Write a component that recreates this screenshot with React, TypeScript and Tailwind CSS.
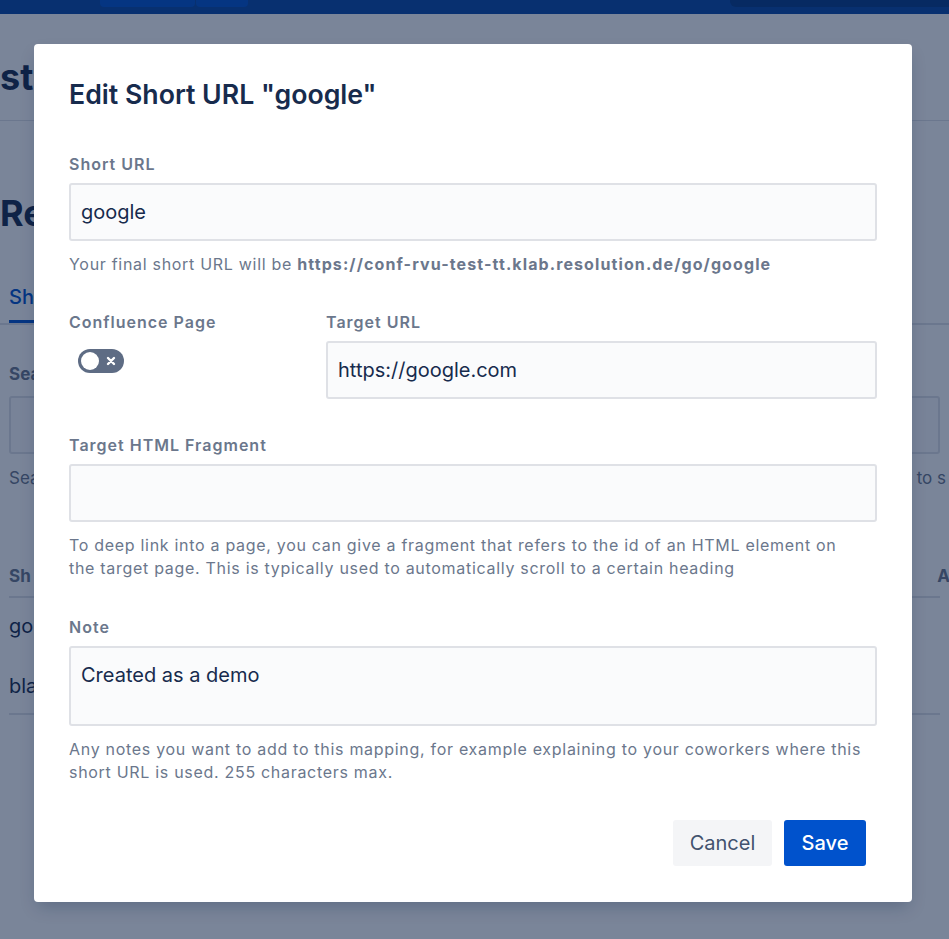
import React from "react";

const font = { fontFamily: 'Inter, "Liberation Sans", Arial, sans-serif' };

function Field({ label, children, hint }: { label: string; children: React.ReactNode; hint?: React.ReactNode }) {
  return (
    <div>
      <p className="text-[16px] font-semibold leading-[20px] tracking-[1px] text-[#6b778c]">{label}</p>
      <div className="mt-[9px]">{children}</div>
      {hint && <p className="mt-[12px] text-[16px] leading-[23px] tracking-[0.7px] text-[#6b778c]">{hint}</p>}
    </div>
  );
}

function TextInput({ value, tall }: { value?: string; tall?: boolean }) {
  return (
    <div
      className={`rounded-[3px] border-2 border-[#dfe1e6] bg-[#fafbfc] px-[10px] text-[20px] text-[#172b4d] ${
        tall ? "h-[80px] pt-[12px]" : "flex h-[58px] items-center"
      }`}
    >
      {value}
    </div>
  );
}

function Toggle() {
  return (
    <div className="ml-[9px] mt-[17px] flex h-[24px] w-[46px] items-center justify-between rounded-full bg-[#5e6c84] px-[3px]">
      <span className="h-[18px] w-[18px] rounded-full bg-white" />
      <svg width="14" height="14" viewBox="0 0 14 14" className="mr-[3px]">
        <path d="M4 4l6 6M10 4l-6 6" stroke="white" strokeWidth="2.4" strokeLinecap="round" />
      </svg>
    </div>
  );
}

function BackgroundPage() {
  return (
    <div className="h-[939px] overflow-hidden bg-white text-[#172b4d]">
      <div className="flex h-[14px] bg-[#0747a6]">
        <div className="ml-[100px] h-[7px] w-[95px] rounded-b bg-[#0052cc]" />
        <div className="ml-px h-[7px] w-[52px] rounded-b bg-[#0052cc]" />
        <div className="ml-auto h-[7px] w-[219px] rounded-bl-md bg-[#053a87]" />
      </div>
      <div className="border-b border-[#dfe1e6] pt-[40px] pb-[20px]">
        <p className="text-[36px] font-bold leading-[46px]">st</p>
      </div>
      <div>
        <p className="mt-[69px] text-[36px] font-bold leading-[46px]">Re</p>
        <div className="mt-[46px] border-b-2 border-[#dfe1e6] pl-[9px]">
          <p className="w-[60px] border-b-[3px] border-[#0052cc] pb-[8px] text-[20px] font-medium text-[#0052cc]">Sh</p>
        </div>
        <div className="px-[9px]">
          <p className="mt-[37px] text-[17px] font-bold text-[#6b778c]">Sea</p>
          <div className="mt-[8px] h-[58px] rounded-[3px] border-2 border-[#dfe1e6] bg-[#fafbfc]" />
          <div className="mt-[12px] flex justify-between text-[17px] text-[#6b778c]">
            <span>Sea</span>
            <span className="-mr-[6px]">to s</span>
          </div>
          <div className="mt-[73px] flex justify-between border-b-2 border-[#dfe1e6] pb-[6px] text-[17px] font-bold text-[#6b778c]">
            <span>Sh</span>
            <span className="-mr-[10px]">A</span>
          </div>
          <p className="mt-[13px] text-[20px]">go</p>
          <p className="mt-[30px] border-b-2 border-[#dfe1e6] pb-[12px] text-[20px]">bla</p>
        </div>
      </div>
    </div>
  );
}

export default function App() {
  return (
    <div className="relative h-[939px] w-[949px] overflow-hidden" style={font}>
      <BackgroundPage />
      <div className="absolute inset-0 bg-[rgba(9,30,66,0.54)]">
        <div className="ml-[34px] mt-[44px] h-[858px] w-[878px] rounded-[4px] bg-white px-[35px] pt-[34px] shadow-[0_8px_16px_-4px_rgba(9,30,66,0.25)]">
          <h1 className="text-[26.7px] font-semibold leading-[32px] text-[#172b4d]">Edit Short URL "google"</h1>
          <div className="mt-[44px]">
            <Field
              label="Short URL"
              hint={
                <>
                  Your final short URL will be{" "}
                  <b className="font-bold tracking-[1.1px]">https://conf-rvu-test-tt.klab.resolution.de/go/google</b>
                </>
              }
            >
              <TextInput value="google" />
            </Field>
          </div>
          <div className="mt-[36px] flex gap-[25px]">
            <div className="w-[232px]">
              <Field label="Confluence Page">
                <Toggle />
              </Field>
            </div>
            <div className="flex-1">
              <Field label="Target URL">
                <TextInput value="https://google.com" />
              </Field>
            </div>
          </div>
          <div className="mt-[36px]">
            <Field
              label="Target HTML Fragment"
              hint={
                <>
                  To deep link into a page, you can give a fragment that refers to the id of an HTML element on
                  <br />
                  the target page. This is typically used to automatically scroll to a certain heading
                </>
              }
            >
              <TextInput />
            </Field>
          </div>
          <div className="mt-[37px]">
            <Field
              label="Note"
              hint={
                <>
                  Any notes you want to add to this mapping, for example explaining to your coworkers where this
                  <br />
                  short URL is used. 255 characters max.
                </>
              }
            >
              <TextInput value="Created as a demo" tall />
            </Field>
          </div>
          <div className="mt-[36px] flex justify-end gap-[12px] pr-[11px]">
            <button className="h-[46px] w-[99px] rounded-[3px] bg-[#f4f5f7] text-[20px] text-[#42526e]">Cancel</button>
            <button className="h-[46px] w-[82px] rounded-[3px] bg-[#0052cc] text-[20px] font-medium text-white">Save</button>
          </div>
        </div>
      </div>
    </div>
  );
}
